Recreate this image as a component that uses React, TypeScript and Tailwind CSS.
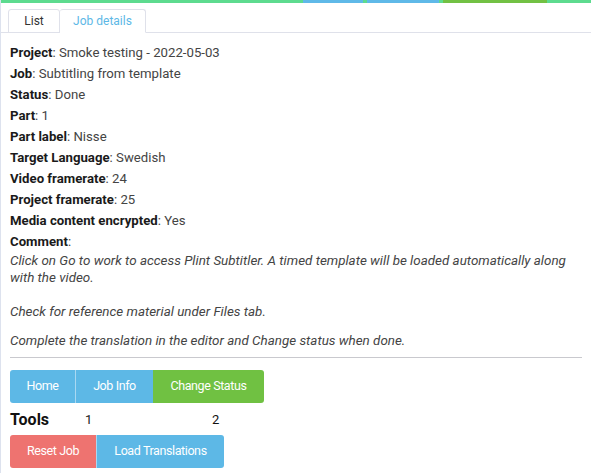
import React from "react";

const details: [string, string][] = [
  ["Project", "Smoke testing - 2022-05-03"],
  ["Job", "Subtitling from template"],
  ["Status", "Done"],
  ["Part", "1"],
  ["Part label", "Nisse"],
  ["Target Language", "Swedish"],
  ["Video framerate", "24"],
  ["Project framerate", "25"],
  ["Media content encrypted", "Yes"],
];

const App = () => {
  return (
    <div
      className="h-[473px] w-full overflow-hidden border-l border-[#dde2ee] bg-white text-[#222]"
      style={{ fontFamily: "Roboto, 'Liberation Sans', sans-serif" }}
    >
      <div className="flex h-[3px]">
        <div className="w-[302px] bg-[#5ddb8f]" />
        <div className="w-[60px] bg-[#5fb9e8]" />
        <div className="w-[4px] bg-[#5ddb8f]" />
        <div className="w-[72px] bg-[#5fb9e8]" />
        <div className="w-[4px] bg-[#5ddb8f]" />
        <div className="w-[104px] bg-[#72c144]" />
        <div className="flex-1 bg-[#5ddb8f]" />
      </div>

      <div className="mt-[6px] flex border-b border-[#dfe1ea] pl-[7px]">
        <div className="-mb-px flex h-[24px] w-[52px] items-center justify-center rounded-t-[3px] border border-[#dfe1ea] text-[12px] text-[#333]">
          List
        </div>
        <div className="-mb-px flex h-[24px] w-[86px] items-center justify-center rounded-t-[3px] border border-b-white border-l-0 border-[#dfe1ea] bg-white text-[12px] text-[#5db8e6]">
          Job details
        </div>
      </div>

      <div className="px-[9px] pt-[9px]">
        <div className="text-[13.2px] leading-[21px] text-[#444]">
          {details.map(([label, value]) => (
            <div key={label}>
              <span className="font-bold text-[#1a1a1a]">{label}</span>: {value}
            </div>
          ))}
          <div>
            <span className="font-bold text-[#1a1a1a]">Comment</span>:
          </div>
        </div>
        <div className="text-[13.4px] italic leading-[17px] text-[#444]">
          <p>
            Click on Go to work to access Plint Subtitler. A timed template will be loaded automatically along
            <br />
            with the video.
          </p>
          <p className="mt-[17px]">Check for reference material under Files tab.</p>
          <p className="mt-[12px]">Complete the translation in the editor and Change status when done.</p>
        </div>

        <div className="mt-[8px] border-t border-[#c9c9ce]" />

        <div className="mt-[12px] flex h-[33px] w-[254px] overflow-hidden rounded-[3px] text-[12.5px] tracking-[-0.4px] text-white">
          <div className="flex w-[66px] items-center justify-center border-r border-[#a9d8f2] bg-[#5db8e6]">Home</div>
          <div className="flex w-[77px] items-center justify-center bg-[#5db8e6]">Job Info</div>
          <div className="flex flex-1 items-center justify-center bg-[#70c142]">Change Status</div>
        </div>

        <div className="mt-[5px] flex h-[24px] items-center">
          <span className="w-[75px] text-[16px] font-bold text-[#111]">Tools</span>
          <span className="w-[127px] text-[13px] text-[#222]">1</span>
          <span className="text-[13px] text-[#111]">2</span>
        </div>

        <div className="mt-[3px] flex h-[33px] w-[214px] overflow-hidden rounded-[3px] text-[12.5px] tracking-[-0.4px] text-white">
          <div className="flex w-[86px] items-center justify-center bg-[#ee7370]">Reset Job</div>
          <div className="flex flex-1 items-center justify-center border-l border-[#a9d8f2] bg-[#5db8e6]">
            Load Translations
          </div>
        </div>
      </div>
    </div>
  );
};

export default App;
